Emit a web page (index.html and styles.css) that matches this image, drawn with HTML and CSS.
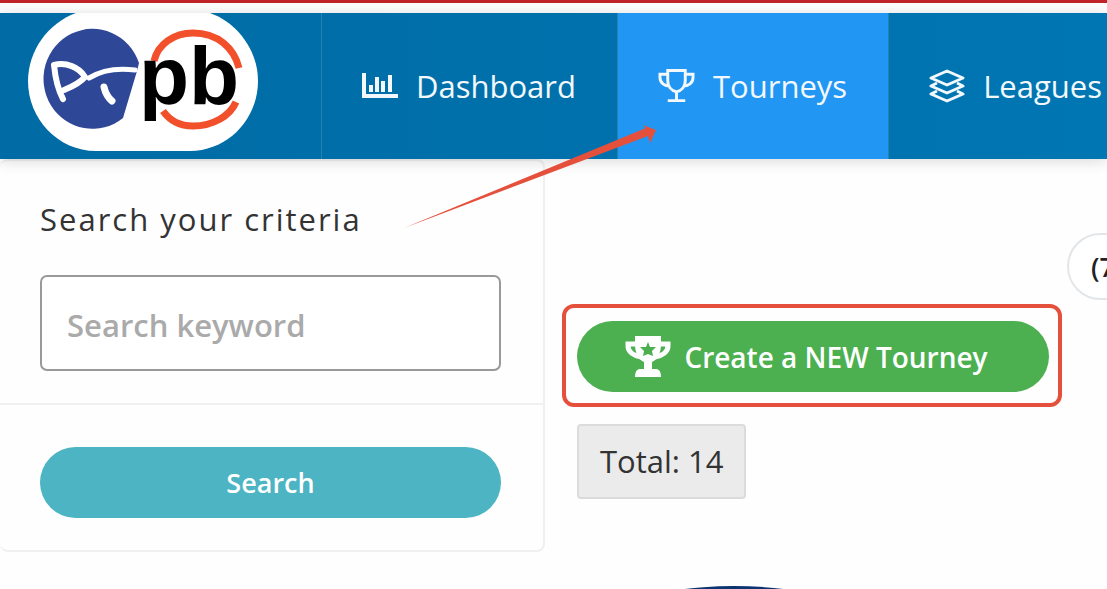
FILE: index.html
```html
<!DOCTYPE html>
<html lang="en">
<head>
    <meta charset="UTF-8">
    <meta name="viewport" content="width=device-width, initial-scale=1.0">
    <title>Tourneys</title>
    <link rel="stylesheet" href="styles.css">
</head>
<body>
    <header class="header">
        <a href="#" class="logo" aria-label="Home">
            <svg width="230" height="138" viewBox="0 0 230 138">
                <path fill="#fff" d="M48 0H182C210 10 230 38 230 68C230 106 200 138 162 138H68C30 138 0 106 0 68C0 38 20 10 48 0Z"/>
                <path fill="#2f4797" d="M111 50A49 50 0 1 0 95 105L109 58Z"/>
                <g fill="none" stroke="#fff" stroke-linecap="round" stroke-linejoin="round">
                    <path stroke-width="6" d="M35 86C29 75 27 62 26 52C38 49 51 54 57 64C51 71 43 74 36 77"/>
                    <path stroke-width="5" d="M61 65C74 57 91 55 107 57"/>
                    <path stroke-width="7" d="M76 74Q78 83 84 88"/>
                </g>
                <path fill="none" stroke="#f2502b" stroke-width="7" d="M126 48C130 31 146 20 165 20C190 20 206 35 211 55"/>
                <path fill="none" stroke="#f2502b" stroke-width="7" d="M135 98C142 108 153 113 165 113C185 113 202 103 208 89"/>
                <text class="logo-text" x="111" y="91">pb</text>
            </svg>
        </a>
        <nav class="nav">
            <a href="#" class="nav-item">
                <svg width="36" height="32" viewBox="0 0 36 32" fill="none" stroke="currentColor" stroke-width="4">
                    <path d="M2 3V26H36M9 15V22M15 7V22M21 11V22M28 5V22"/>
                </svg>
                Dashboard
            </a>
            <a href="#" class="nav-item active">
                <svg width="37" height="36" viewBox="0 0 38 36" fill="none" stroke="currentColor" stroke-width="3">
                    <path d="M10 2H28V12C28 19 24 23 19 24C14 23 10 19 10 12ZM10 6H2V9C2 15 7 18 12 18M28 6H36V9C36 15 31 18 26 18M19 24V33M10 33H28"/>
                </svg>
                Tourneys
            </a>
            <a href="#" class="nav-item">
                <svg width="36" height="36" viewBox="0 0 36 36" fill="none" stroke="currentColor" stroke-width="3" stroke-linejoin="round">
                    <path d="M18 3L34 10L18 17L2 10ZM8 15L2 18L18 25L34 18L28 15M8 23L2 26L18 33L34 26L28 23"/>
                </svg>
                Leagues
            </a>
        </nav>
    </header>

    <main class="main">
        <form class="sidebar">
            <div class="sidebar-body">
                <label class="title" for="keyword">Search your criteria</label>
                <input class="keyword" id="keyword" type="text" placeholder="Search keyword">
            </div>
            <div class="sidebar-footer">
                <button class="btn btn-search" type="submit">Search</button>
            </div>
        </form>

        <section class="content">
            <button class="pill" type="button">(7</button>
            <div class="create">
                <button class="btn btn-create" type="button">
                    <svg width="48" height="42" viewBox="0 0 48 42">
                        <path fill="none" stroke="#fff" stroke-width="5" d="M13 8H4V10C4 16 10 20 17 21M35 8H44V10C44 16 38 20 31 21"/>
                        <path fill="#fff" d="M11 0H37V8C37 18 33 24 28 26V33H33Q37 34 37 41H11Q11 34 15 33H20V26C15 24 11 18 11 8Z"/>
                        <path fill="#4caf50" d="M24 6L26 11L32 11L28 15L29 20L24 18L19 20L20 15L16 11L22 11Z"/>
                    </svg>
                    Create a NEW Tourney
                </button>
            </div>
            <div class="total">Total: 14</div>
            <div class="badge"></div>
        </section>
    </main>

    <!-- arrow pointing at the Tourneys tab -->
    <svg class="arrow" width="256" height="108" viewBox="0 0 256 108">
        <path fill="#e5503c" d="M2 108L244 8L241 5L254 10L248 23L246 16Z"/>
    </svg>
</body>
</html>
```
FILE: styles.css
```css
* {
    box-sizing: border-box;
}

body {
    margin: 0;
    height: 100vh;
    overflow: hidden;
    position: relative;
    border-top: 3px solid #bf2228;
    padding-top: 10px;
    background: #fefefe;
    color: #333;
    font-family: "Open Sans", "Noto Sans", sans-serif;
    font-size: 31px;
}

button, input {
    font-family: inherit;
}

/* Header */
.header {
    display: flex;
    height: 146px;
    background: linear-gradient(to right, #006ba4, #0076b3);
    box-shadow: 0 2px 14px rgba(0, 0, 0, 0.15);
    position: relative;
}

.logo {
    width: 321px;
    padding-left: 28px;
    flex-shrink: 0;
}

.logo svg {
    display: block;
}

.logo-text {
    font-family: "Liberation Sans", Arial, sans-serif;
    font-size: 82px;
    font-weight: bold;
}

.nav {
    display: flex;
}

.nav-item {
    display: flex;
    align-items: center;
    gap: 18px;
    padding: 0 41px 0 40px;
    border-left: 1px solid #2580b3;
    color: #f2f8fc;
    text-decoration: none;
    white-space: nowrap;
}

.nav-item.active {
    background: #2196f3;
}

/* Search panel */
.main {
    display: grid;
    grid-template-columns: 545px 1fr;
    align-items: start;
}

.sidebar {
    border: 2px solid #f0f0f0;
    border-left: 0;
    border-radius: 8px;
}

.sidebar-body {
    padding: 36px 42px 32px 40px;
    border-bottom: 2px solid #f0f0f0;
}

.title {
    display: block;
    line-height: 44px;
    margin-bottom: 34px;
    letter-spacing: 2px;
}

.keyword {
    display: block;
    width: 100%;
    height: 96px;
    padding: 4px 25px 0;
    border: 2px solid #999;
    border-radius: 7px;
    background: #fff;
    font-size: 31px;
    font-weight: 600;
}

.keyword::placeholder {
    color: #aaa;
}

.sidebar-footer {
    padding: 42px 42px 32px 40px;
}

.btn {
    display: flex;
    align-items: center;
    justify-content: center;
    width: 100%;
    height: 71px;
    padding: 0;
    border: 0;
    border-radius: 36px;
    color: #fff;
    font-size: 27px;
    font-weight: 600;
    white-space: nowrap;
}

.btn-search {
    background: #4cb4c3;
}

/* Tourney list */
.content {
    padding: 74px 0 0 32px;
    min-width: 0;
}

.pill {
    display: block;
    width: 160px;
    height: 67px;
    margin-left: 490px;
    padding: 0 22px;
    border: 2px solid #e3e6e9;
    border-radius: 34px;
    background: #fff;
    color: #222;
    font-size: 27px;
    font-weight: 600;
    text-align: left;
}

.create {
    position: relative;
    width: 472px;
    margin: 21px 0 32px;
}

.create::after {
    content: "";
    position: absolute;
    inset: -17px -13px -15px -15px;
    border: 4px solid #e5503c;
    border-radius: 12px;
}

.btn-create {
    gap: 12px;
    padding-right: 14px;
    background: #4caf50;
    font-size: 28px;
}

.total {
    width: fit-content;
    padding: 14px 21px;
    border: 2px solid #d9dbdd;
    border-radius: 4px;
    background: #ebebeb;
    line-height: 43px;
}

.badge {
    width: 314px;
    height: 120px;
    margin-top: 87px;
    border-radius: 50%;
    background: #0b3470;
}

.arrow {
    position: absolute;
    left: 402px;
    top: 117px;
}
```
